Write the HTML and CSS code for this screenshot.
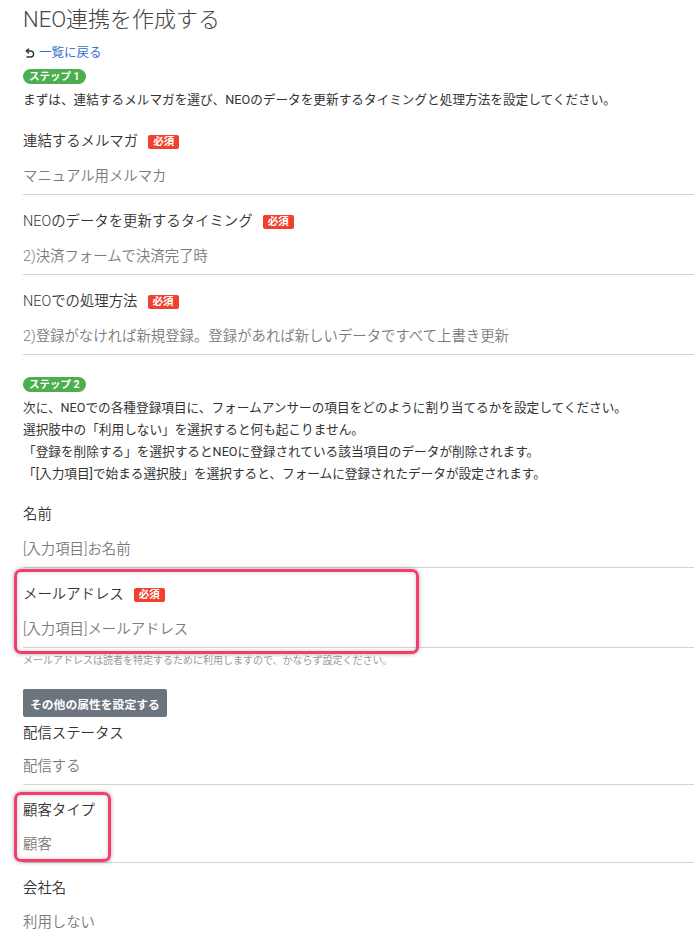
FILE: index.html
```html
<!DOCTYPE html>
<html>
<head>
  <meta charset="utf-8">
  <title>NEO連携を作成する</title>
  <link rel="stylesheet" href="styles.css">
</head>
<body>
  <div class="page">
    <h1 class="title">NEO連携を作成する</h1>
    <a class="back" href="#">
      <svg class="back-icon" width="10" height="11" viewBox="0 0 10 11">
        <path d="M3.6 1 L1.2 3 L3.6 5" fill="none" stroke="#333" stroke-width="1.4" stroke-linejoin="round" stroke-linecap="round"/>
        <path d="M1.6 3 H5.6 A3 3 0 0 1 5.6 9 H2" fill="none" stroke="#333" stroke-width="1.4" stroke-linecap="round"/>
      </svg>一覧に戻る
    </a>

    <span class="step">ステップ 1</span>
    <p class="desc">まずは、連結するメルマガを選び、NEOのデータを更新するタイミングと処理方法を設定してください。</p>

    <div class="fields">
      <div class="field">
        <div class="label">連結するメルマガ<span class="req">必須</span></div>
        <div class="value">マニュアル用メルマカ</div>
      </div>
      <div class="field">
        <div class="label">NEOのデータを更新するタイミング<span class="req">必須</span></div>
        <div class="value">2)決済フォームで決済完了時</div>
      </div>
      <div class="field">
        <div class="label">NEOでの処理方法<span class="req">必須</span></div>
        <div class="value">2)登録がなければ新規登録。登録があれば新しいデータですべて上書き更新</div>
      </div>
    </div>

    <span class="step step-2">ステップ 2</span>
    <p class="desc">
      次に、NEOでの各種登録項目に、フォームアンサーの項目をどのように割り当てるかを設定してください。<br>
      選択肢中の「利用しない」を選択すると何も起こりません。<br>
      「登録を削除する」を選択するとNEOに登録されている該当項目のデータが削除されます。<br>
      「[入力項目]で始まる選択肢」を選択すると、フォームに登録されたデータが設定されます。
    </p>

    <div class="fields fields-2">
      <div class="field">
        <div class="label">名前</div>
        <div class="value">[入力項目]お名前</div>
      </div>
      <div class="field">
        <div class="label">メールアドレス<span class="req">必須</span></div>
        <div class="value">[入力項目]メールアドレス</div>
        <div class="mark mark-mail"></div>
      </div>
    </div>
    <p class="help">メールアドレスは読者を特定するために利用しますので、かならず設定ください。</p>

    <button class="btn" type="button">その他の属性を設定する</button>

    <div class="fields fields-3">
      <div class="field">
        <div class="label">配信ステータス</div>
        <div class="value">配信する</div>
      </div>
      <div class="field">
        <div class="label">顧客タイプ</div>
        <div class="value">顧客</div>
        <div class="mark mark-type"></div>
      </div>
      <div class="field">
        <div class="label">会社名</div>
        <div class="value">利用しない</div>
      </div>
    </div>
  </div>
</body>
</html>
```

FILE: styles.css
```css
body {
  margin: 0;
  background: #fff;
  font-family: Roboto, "Noto Sans CJK JP", sans-serif;
  color: #333;
}

.page {
  padding: 4px 0 0 23px;
}

.title {
  margin: 0;
  font-size: 22px;
  font-weight: 300;
  line-height: 32px;
  color: #444;
}

.back {
  display: flex;
  align-items: center;
  gap: 4px;
  margin-top: 8px;
  font-size: 12.5px;
  line-height: 18px;
  color: #2f6fd0;
  text-decoration: none;
}

.back-icon {
  margin-left: 2px;
}

.step {
  display: inline-block;
  margin-top: 7px;
  padding: 0 6px;
  height: 15px;
  line-height: 15px;
  border-radius: 8px;
  background-color: #4cae4f;
  color: #fff;
  font-size: 10.5px;
  font-weight: bold;
}

.step-2 {
  margin-top: 22px;
}

.desc {
  margin: 5px 0 0;
  font-size: 12.65px;
  line-height: 22px;
  color: #333;
}

.fields {
  margin-top: 4px;
}

.field {
  position: relative;
  padding: 16px 0 6px;
  border-bottom: 1px solid #d4d4d4;
}

.fields-2 {
  margin-top: 3px;
}

.fields-3 {
  margin-top: 0;
}

.fields-3 .field {
  padding-top: 15px;
}

.fields-3 .value {
  margin-top: 12px;
}

.fields-3 .field:first-child {
  padding-top: 6px;
}

.fields-3 .field:first-child .value {
  margin-top: 11px;
}

.label {
  display: flex;
  align-items: center;
  font-size: 14.4px;
  font-weight: 350;
  line-height: 22px;
  color: #333;
}

.req {
  display: inline-block;
  margin-left: 10px;
  padding: 0 5px;
  height: 14px;
  line-height: 14px;
  border-radius: 2px;
  background-color: #f0412f;
  color: #fff;
  font-size: 10.5px;
  font-weight: bold;
}

.value {
  margin-top: 13px;
  font-size: 14.4px;
  font-weight: 350;
  line-height: 22px;
  color: #7a7a7a;
}

.help {
  margin: 5px 0 0;
  font-size: 10px;
  line-height: 16px;
  color: #999;
}

.btn {
  display: block;
  margin-top: 20px;
  height: 28px;
  padding: 0 7px;
  border: none;
  border-radius: 2px;
  background-color: #6c757d;
  color: #fff;
  font-family: inherit;
  font-size: 11.8px;
  font-weight: bold;
}

/* highlight frames drawn over the screenshot */
.mark {
  position: absolute;
  left: -9px;
  border: 3px solid #f53d6d;
  border-radius: 7px;
  box-shadow: 0 0 4px rgba(0, 0, 0, 0.35), inset 0 0 4px rgba(0, 0, 0, 0.2);
  box-sizing: border-box;
}

.mark-mail {
  top: 1px;
  width: 405px;
  height: 85px;
}

.mark-type {
  top: 7px;
  width: 97px;
  height: 70px;
}
```
